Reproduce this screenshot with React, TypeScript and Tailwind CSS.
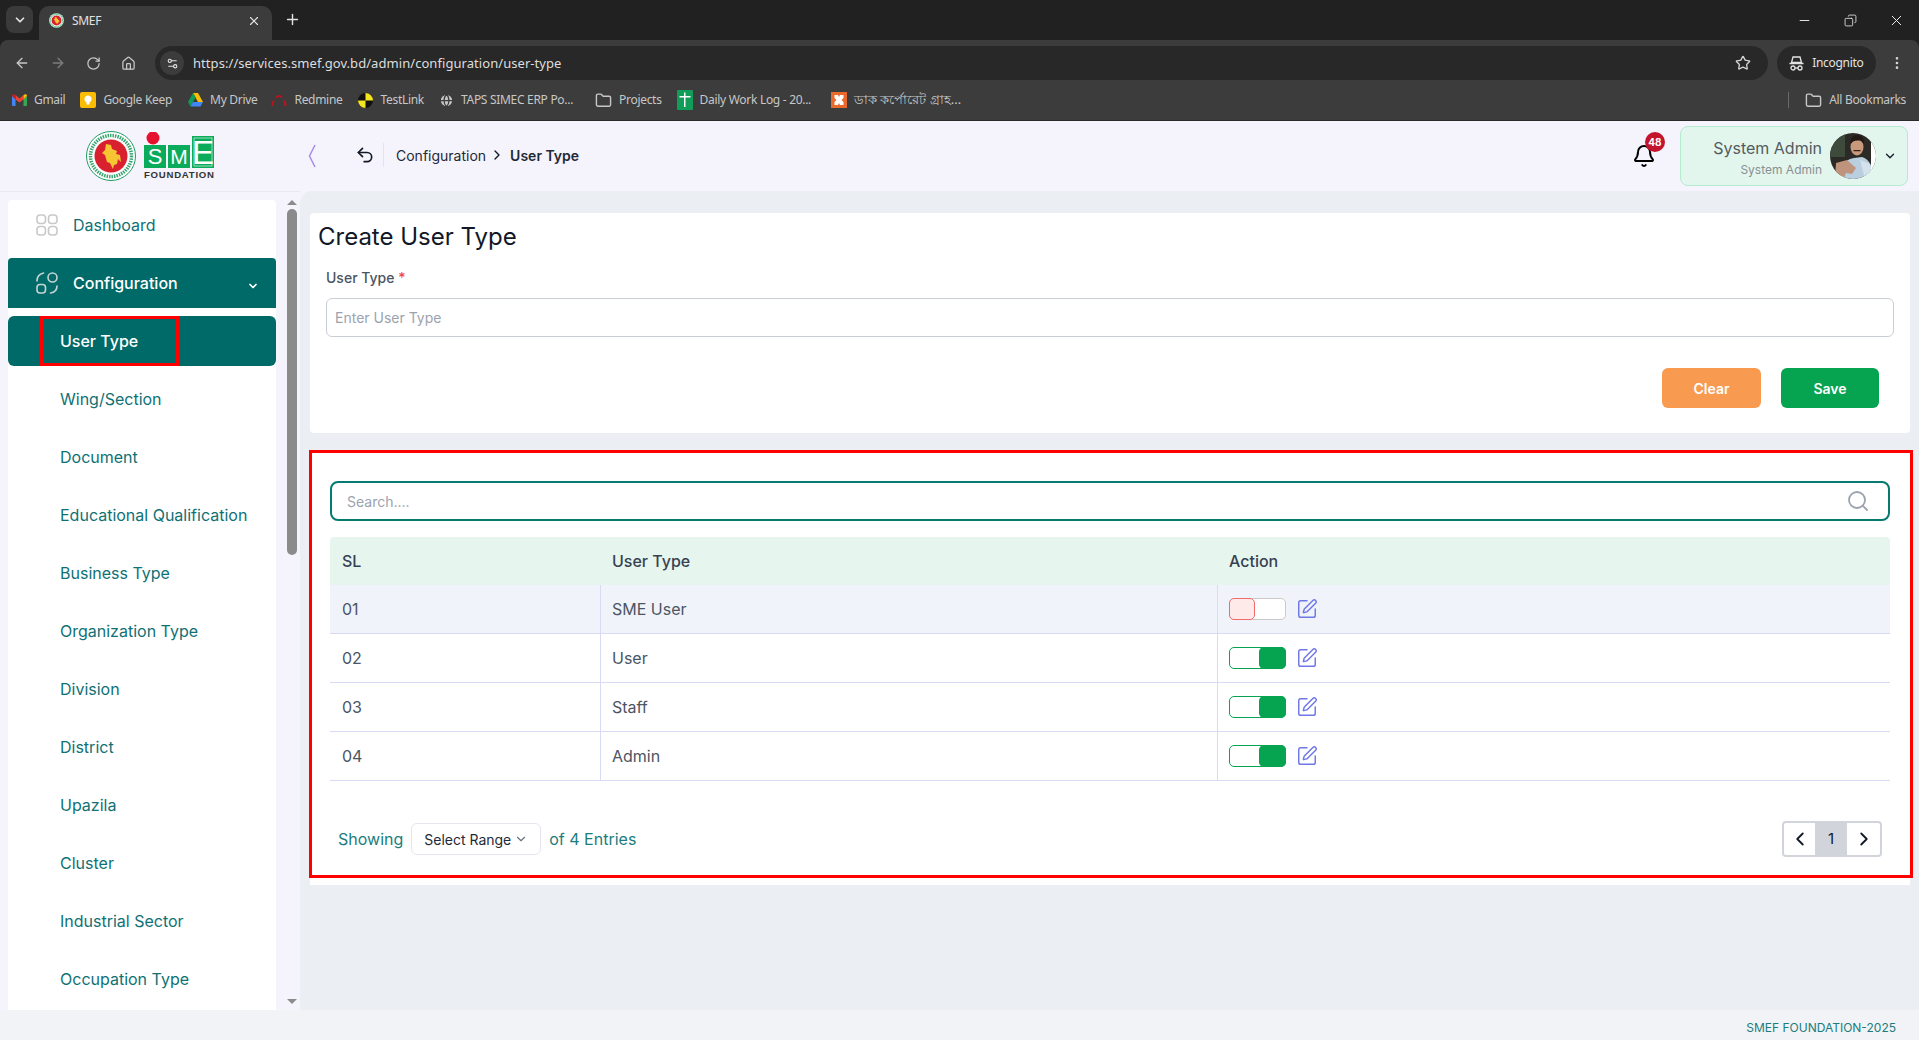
import {
  ArrowLeft,
  ArrowRight,
  ChevronDown,
  ChevronLeft,
  ChevronRight,
  Copy,
  EllipsisVertical,
  Folder,
  Globe,
  Home,
  Minus,
  Plus,
  RotateCw,
  Search,
  Settings2,
  SquarePen,
  Star,
  Undo2,
  Bell,
  X,
} from "lucide-react";

const chromeFont = "[font-family:'Noto_Sans','Open_Sans',sans-serif]";

const Emblem = ({ size }: { size: number }) => (
  <svg width={size} height={size} viewBox="0 0 50 50">
    <circle cx="25" cy="25" r="24.5" fill="#fff" stroke="#1f9d62" strokeWidth="1" />
    <circle cx="25" cy="25" r="20.5" fill="none" stroke="#3aa56f" strokeWidth="3.5" strokeDasharray="1.5 1" />
    <circle cx="25" cy="25" r="16.5" fill="#d9202f" />
    <path d="M20 13l5 1 1 4 5 2-1 3 4 1 1 7-3-3-1 5-3 1-1 4-3-6-3-1-2-7-3-2 3-3z" fill="#f6c532" />
  </svg>
);

const SmeLogo = () => (
  <svg width="72" height="48" viewBox="0 0 72 48">
    <circle cx="9" cy="6" r="6.5" fill="#e5112f" />
    <rect x="0" y="13" width="22" height="23" fill="#0bab5c" />
    <rect x="24" y="13" width="22" height="23" fill="#0bab5c" />
    <rect x="48" y="4" width="22" height="32" fill="#0bab5c" />
    <rect x="50" y="6" width="18" height="28" fill="none" stroke="#fff" strokeWidth="0.6" />
    <text x="11" y="32" textAnchor="middle" fontSize="22" fill="#fff" fontFamily="Liberation Sans">S</text>
    <text x="35" y="32" textAnchor="middle" fontSize="21" fill="#fff" fontFamily="Liberation Sans">M</text>
    <text x="59" y="32" textAnchor="middle" fontSize="33" fill="#fff" fontFamily="Liberation Sans">E</text>
    <text x="0" y="46" fontSize="9.6" fontWeight="700" fill="#333" fontFamily="Liberation Sans" textLength="70">FOUNDATION</text>
  </svg>
);

const Avatar = () => (
  <div className="w-[46px] h-[46px] rounded-full bg-white overflow-hidden shrink-0">
    <svg width="46" height="46" viewBox="0 0 46 46">
      <rect width="46" height="46" fill="#2c2a26" />
      <rect x="0" y="0" width="15" height="24" fill="#3d4a3c" />
      <path d="M10 46c0-12 5-20 14-21l8-1c7 2 11 9 12 22z" fill="#b9cfe0" />
      <path d="M30 27l10 4 3 15h-8z" fill="#d5e2ec" />
      <path d="M6 30l11-3 9 8-4 6-6-1-2 5H5z" fill="#c0947c" />
      <ellipse cx="27" cy="14" rx="6.500" ry="8.500" fill="#c9997c" />
      <path d="M20.500 11c-.5-6 3-9 7-9s7.500 3 6 9c-1.500-3-3-3.500-6-3.500s-5 1-7 3.500z" fill="#241a14" />
      <path d="M23.500 17h7v1.300h-7z" fill="#3a2318" />
      <rect x="41" y="0" width="5" height="46" fill="#fff" />
    </svg>
  </div>
);

const DashboardIcon = () => (
  <svg width="24" height="24" viewBox="0 0 24 24" fill="none" stroke="#c9c9c9" strokeWidth="1.6">
    <rect x="2" y="2" width="8.5" height="8.5" rx="3" />
    <rect x="13.5" y="2" width="8.5" height="8.5" rx="3" />
    <rect x="2" y="13.5" width="8.5" height="8.5" rx="3" />
    <rect x="13.5" y="13.5" width="8.5" height="8.5" rx="3" />
  </svg>
);

const ConfigIcon = () => (
  <svg width="24" height="24" viewBox="0 0 24 24" fill="none" stroke="#c6d5d4" strokeWidth="1.6" strokeLinecap="round">
    <path d="M2 10c0-4 2-7 6.5-8" />
    <circle cx="17.5" cy="6.5" r="4.5" />
    <rect x="2" y="13.5" width="8.5" height="8.5" rx="3" />
    <path d="M22 15c0 4-2 6.5-6.5 7" />
  </svg>
);

const Gmail = () => (
  <svg width="15" height="12" viewBox="0 0 15 12">
    <path d="M0 2v9a1 1 0 001 1h2.500V5.500z" fill="#4285f4" />
    <path d="M15 2v9a1 1 0 01-1 1h-2.500V5.500z" fill="#34a853" />
    <path d="M3.500 5.500V1L7.500 4.500 11.500 1v4.500l-4 3z" fill="#ea4335" />
    <path d="M0 2c0-2 2-2.500 3.500-1v4.500z" fill="#c5221f" />
    <path d="M15 2c0-2-2-2.500-3.500-1v4.500z" fill="#fbbc04" />
  </svg>
);

const Keep = () => (
  <svg width="16" height="16" viewBox="0 0 16 16">
    <rect width="16" height="16" rx="2" fill="#fbbc04" />
    <circle cx="8" cy="7" r="3.500" fill="#fff" />
    <rect x="6.500" y="10" width="3" height="2.500" fill="#fff" />
  </svg>
);

const Drive = () => (
  <svg width="15" height="14" viewBox="0 0 15 14">
    <path d="M5 0h5l5 9h-5z" fill="#fbbc04" />
    <path d="M5 0L0 9l2.500 4.500L7.500 4.500z" fill="#0f9d58" />
    <path d="M2.500 13.500h10L15 9H5z" fill="#4285f4" />
  </svg>
);

const Redmine = () => (
  <svg width="16" height="14" viewBox="0 0 16 14" fill="none" stroke="#b5161e" strokeWidth="2.200">
    <path d="M1.500 13c0-2 .5-4 1.500-5.500M5 4.500C6 3.500 7 3 8 3s2 .5 3 1.500M13 7.500c1 1.500 1.500 3.500 1.500 5.500" />
  </svg>
);

const TestLink = () => (
  <svg width="15" height="15" viewBox="0 0 15 15">
    <circle cx="7.500" cy="7.500" r="7.500" fill="#111" />
    <path d="M7.500 0a7.500 7.500 0 017.500 7.500H7.500zM7.500 15A7.500 7.500 0 010 7.500h7.500z" fill="#f3e620" />
  </svg>
);

const Sheets = () => (
  <svg width="16" height="20" viewBox="0 0 16 20">
    <rect width="16" height="20" rx="1" fill="#0f9d58" />
    <path d="M7 2.500h1.500V6h5v1.500h-5V17H7V7.500H2.500V6H7z" fill="#fff" />
  </svg>
);

const Xampp = () => (
  <svg width="16" height="16" viewBox="0 0 16 16">
    <rect width="16" height="16" fill="#e96a2d" />
    <path d="M3.500 3h3.500l1 2 1-2h3.500v3l-2 2 2 2v3H9l-1-2-1 2H3.500v-3l2-2-2-2z" fill="#fff" />
  </svg>
);

const Bookmark = ({
  icon,
  label,
  className,
  labelClassName,
}: {
  icon: React.ReactNode;
  label: string;
  className?: string;
  labelClassName?: string;
}) => (
  <div className={`flex items-center gap-[7px] shrink-0 ${className ?? ""}`}>
    <span className="flex items-center justify-center">{icon}</span>
    <span className={`text-[#c7c7c7] whitespace-nowrap ${labelClassName ?? "text-[12px] tracking-[-0.3px]"}`}>{label}</span>
  </div>
);

const BrowserChrome = () => (
  <div className={`shrink-0 bg-[#202120] ${chromeFont}`}>
    <div className="h-[40px] flex items-end pl-[6px] pr-[6px]">
      <div className="w-[27px] h-[27px] mb-[7px] rounded-[8px] bg-[#3a3a3a] flex items-center justify-center text-[#e3e3e3]">
        <ChevronDown size={14} strokeWidth={3} />
      </div>
      <div className="ml-[6px] w-[233px] h-[34px] rounded-t-[10px] bg-[#3c3c3c] flex items-center pl-[10px] pr-[11px] pb-[5px] text-[#e3e3e3]">
        <Emblem size={15} />
        <span className="ml-[8px] text-[12px] tracking-[-0.3px]">SMEF</span>
        <X size={14} className="ml-auto" />
      </div>
      <Plus size={17} className="ml-[12px] mb-[12px] text-[#e3e3e3]" />
      <div className="ml-auto flex items-center h-[40px] text-[#ededed]">
        <Minus size={15} strokeWidth={1.5} className="mr-[32px]" />
        <Copy size={13} strokeWidth={1.5} className="mr-[31px] -scale-x-100" />
        <X size={17} strokeWidth={1.4} className="mr-[8px]" />
      </div>
    </div>
    <div className="h-[40px] bg-[#3c3c3c] rounded-t-[8px] flex items-end pl-[14px] pr-[14px] text-[#c7c7c7]">
      <div className="h-[34px] flex items-center gap-[20px]">
        <ArrowLeft size={16} />
        <ArrowRight size={16} className="text-[#7d7d7d]" />
        <RotateCw size={15} />
        <Home size={15} />
      </div>
      <div className="ml-[19px] h-[34px] w-[1615px] rounded-full bg-[#282828] flex items-center pl-[5px] pr-[17px]">
        <span className="w-[24px] h-[24px] rounded-full bg-[#3c3c3c] flex items-center justify-center">
          <Settings2 size={13} className="text-[#e3e3e3]" />
        </span>
        <span className="ml-[9px] text-[13px] text-[#dedede] tracking-[0.06px] pt-[1px]">https://services.smef.gov.bd/admin/configuration/user-type</span>
        <Star size={16} className="ml-auto text-[#d5d5d5]" />
      </div>
      <div className="ml-[9px] h-[34px] w-[99px] rounded-full bg-[#282828] flex items-center pl-[12px] text-[#e3e3e3]">
        <svg width="15" height="15" viewBox="0 0 15 15" fill="none" stroke="currentColor" strokeWidth="1.300">
          <path d="M4 1h7l1.500 5.500h-10zM0.500 7.500h14" />
          <circle cx="4" cy="12" r="2" />
          <circle cx="11" cy="12" r="2" />
          <path d="M6 12h3" />
        </svg>
        <span className="ml-[8px] text-[12px] tracking-[-0.3px]">Incognito</span>
      </div>
      <EllipsisVertical size={16} className="ml-[13px] mb-[9px] text-[#d5d5d5]" />
    </div>
    <div className="h-[41px] bg-[#3c3c3c] border-b border-[#2a2a2a] flex items-center pl-[12px] pr-[13px]">
      <Bookmark icon={<Gmail />} label="Gmail" />
      <Bookmark icon={<Keep />} label="Google Keep" className="ml-[15px]" />
      <Bookmark icon={<Drive />} label="My Drive" className="ml-[16px]" />
      <Bookmark icon={<Redmine />} label="Redmine" className="ml-[14px]" />
      <Bookmark icon={<TestLink />} label="TestLink" className="ml-[16px]" />
      <Bookmark icon={<Globe size={15} fill="#c7c7c7" stroke="#3c3c3c" />} label="TAPS SIMEC ERP Po..." className="ml-[15px]" />
      <Bookmark icon={<Folder size={17} />} label="Projects" className="ml-[22px] text-[#c7c7c7]" />
      <Bookmark icon={<Sheets />} label="Daily Work Log - 20..." className="ml-[15px]" />
      <Bookmark
        icon={<Xampp />}
        label="ডাক কর্পোরেট গ্রাহ..."
        className="ml-[20px]"
        labelClassName="text-[13px]"
      />
      <div className="ml-auto w-px h-[16px] bg-[#6a6a6a]" />
      <Bookmark icon={<Folder size={17} className="text-[#c7c7c7]" />} label="All Bookmarks" className="ml-[16px]" />
    </div>
  </div>
);

const AppHeader = () => (
  <header className="h-[70px] shrink-0 bg-[#f5f3fb] flex items-center">
    <div className="w-[300px] shrink-0 flex items-center pl-[86px] gap-[8px]">
      <Emblem size={50} />
      <SmeLogo />
    </div>
    <svg width="8" height="24" viewBox="0 0 8 24" fill="none" stroke="#a78bea" strokeWidth="1.500" className="ml-[8px]">
      <path d="M7 1L1.500 12 7 23" />
    </svg>
    <Undo2 size={20} strokeWidth={2} className="ml-[39px] -mt-[3px] text-[#111827]" />
    <div className="ml-[8px] w-px h-[24px] bg-[#e5e3ee] -mt-[2px]" />
    <span className="ml-[12px] -mt-[2px] text-[14px] text-[#1f2937]">Configuration</span>
    <ChevronRight size={16} strokeWidth={2} className="ml-[3px] -mt-[2px] text-[#111827]" />
    <span className="ml-[5px] -mt-[2px] text-[14px] font-semibold text-[#1f2937]">User Type</span>
    <div className="ml-auto relative mr-[24px]">
      <Bell size={24} strokeWidth={2} className="text-black" />
      <span className="absolute -top-[12px] left-[13px] w-[20px] h-[20px] rounded-full bg-[#c4142b] text-white text-[10px] font-bold flex items-center justify-center">48</span>
    </div>
    <div className="w-[228px] h-[60px] mr-[11px] rounded-[8px] border border-[#b5ebd0] bg-[#e2f6ed] flex items-center justify-end pr-[10px]">
      <div className="text-right mr-[8px]">
        <p className="text-[16px] leading-[20px] mt-[4px] text-[#555b61]">System Admin</p>
        <p className="text-[12px] leading-[18px] mt-[3px] text-[#8a8f94]">System Admin</p>
      </div>
      <Avatar />
      <ChevronDown size={14} strokeWidth={2.2} className="ml-[7px] text-[#111827]" />
    </div>
  </header>
);

const subItems = [
  "Wing/Section",
  "Document",
  "Educational Qualification",
  "Business Type",
  "Organization Type",
  "Division",
  "District",
  "Upazila",
  "Cluster",
  "Industrial Sector",
  "Occupation Type",
];

const Sidebar = () => (
  <aside className="w-[300px] shrink-0 bg-[#f5f3fb] flex pl-[8px] pt-[8px] border-t border-[#e9e7f0] h-full overflow-hidden">
    <nav className="w-[268px] bg-white flex flex-col gap-[8px] text-[16px] text-[#0f7175] overflow-hidden rounded-t-[4px]">
      <div className="h-[50px] shrink-0 flex items-center pl-[27px] gap-[14px]">
        <DashboardIcon />
        <span>Dashboard</span>
      </div>
      <div className="h-[50px] shrink-0 flex items-center pl-[27px] gap-[14px] bg-[#006a68] text-white font-medium rounded-t-[4px]">
        <ConfigIcon />
        <span>Configuration</span>
        <ChevronDown size={12} strokeWidth={3.5} className="ml-auto mr-[17px] mt-[6px]" />
      </div>
      <div className="relative h-[50px] shrink-0 flex items-center pl-[52px] bg-[#006a68] text-white font-medium rounded-[6px]">
        <span>User Type</span>
        <div className="absolute left-[32px] top-0 w-[139px] h-[50px] border-[3px] border-[#ff0000]" />
      </div>
      {subItems.map((item) => (
        <div key={item} className="h-[50px] shrink-0 flex items-center pl-[52px]">
          {item}
        </div>
      ))}
    </nav>
    <div className="ml-[9px] w-[13px] h-full flex flex-col items-center bg-[#f5f3fb] pb-[6px]">
      <span className="w-0 h-0 mt-0 border-x-[5px] border-x-transparent border-b-[5px] border-b-[#8b8b8b]" />
      <div className="mt-[4px] w-[10px] h-[346px] rounded-full bg-[#8b8b8b]" />
      <span className="mt-auto w-0 h-0 border-x-[5px] border-x-transparent border-t-[5px] border-t-[#8b8b8b]" />
    </div>
  </aside>
);

const CreateCard = () => (
  <section className="bg-white rounded-[4px] h-[220px] pt-[6px] pl-[8px] pr-[16px]">
    <h1 className="text-[24px] leading-[36px] text-[#111827]">Create User Type</h1>
    <label className="block ml-[8px] mt-[13px] text-[14px] leading-[20px] font-medium text-[#4b5563]">
      User Type <span className="text-[#ef4444]">*</span>
    </label>
    <div className="ml-[8px] mt-[10px] h-[39px] rounded-[6px] border border-[#c9ced6] flex items-center pl-[8px] text-[14px] text-[#9ca3af]">
      Enter User Type
    </div>
    <div className="mt-[31px] flex justify-end gap-[20px] pr-[15px]">
      <button className="w-[99px] h-[40px] rounded-[6px] bg-[#f89a50] text-white text-[14px] font-semibold">Clear</button>
      <button className="w-[98px] h-[40px] rounded-[6px] bg-[#06a350] text-white text-[14px] font-semibold">Save</button>
    </div>
  </section>
);

const Toggle = ({ on }: { on: boolean }) =>
  on ? (
    <div className="w-[57px] h-[22px] rounded-[5px] border border-[#06a350] bg-white flex justify-end">
      <div className="w-[26px] h-full -my-px -mr-px box-content py-px pr-px rounded-[5px] bg-[#06a350]" />
    </div>
  ) : (
    <div className="w-[57px] h-[22px] rounded-[5px] border border-[#cfc8c8] bg-white flex">
      <div className="w-[26px] h-[22px] -mt-px -ml-px rounded-[5px] border border-[#f36a6a] bg-[#ffeaea]" />
    </div>
  );

const rows = [
  { sl: "01", name: "SME User", on: false },
  { sl: "02", name: "User", on: true },
  { sl: "03", name: "Staff", on: true },
  { sl: "04", name: "Admin", on: true },
];

const ListCard = () => (
  <section className="relative mt-[18px] bg-white h-[434px] pt-[30px] px-[20px]">
    <div className="h-[40px] rounded-[8px] border-2 border-[#047a70] flex items-center pl-[15px] pr-[18px] text-[14px] text-[#9ca3af]">
      Search....
      <Search size={24} strokeWidth={1.8} className="ml-auto text-[#9ca3af]" />
    </div>
    <div className="mt-[16px] text-[16px]">
      <div className="grid grid-cols-[270px_617px_1fr] h-[48px] items-center bg-[#e6f6ef] rounded-t-[4px] font-medium text-[#374151]">
        <span className="pl-[12px]">SL</span>
        <span className="pl-[12px]">User Type</span>
        <span className="pl-[12px]">Action</span>
      </div>
      {rows.map((row, i) => (
        <div
          key={row.sl}
          className={`grid grid-cols-[270px_617px_1fr] h-[49px] border-b border-[#d9daf5] text-[#4b5563] ${i === 0 ? "bg-[#f0f3f9]" : "bg-white"}`}
        >
          <span className="pl-[12px] flex items-center">{row.sl}</span>
          <span className="pl-[11px] flex items-center border-l border-[#d9daf5]">{row.name}</span>
          <div className="pl-[11px] flex items-center gap-[10px] border-l border-[#d9daf5]">
            <Toggle on={row.on} />
            <SquarePen size={22} strokeWidth={1.6} className="text-[#6f78e6]" />
          </div>
        </div>
      ))}
    </div>
    <div className="mt-[40px] flex items-center pl-[8px] pr-[8px] text-[16px] text-[#1b7d7d]">
      <span>Showing</span>
      <div className="ml-[8px] w-[130px] h-[32px] rounded-[6px] border border-[#e5e7f0] flex items-center justify-center gap-[3px] text-[14px] text-[#1f2937]">
        Select Range
        <ChevronDown size={14} className="text-[#6b7280]" />
      </div>
      <span className="ml-[8px]">of 4 Entries</span>
      <div className="ml-auto h-[36px] w-[100px] rounded-[4px] border-2 border-[#d1d5db] grid grid-cols-[31px_32px_1fr] text-[#111827]">
        <span className="flex items-center justify-center"><ChevronLeft size={22} strokeWidth={2} /></span>
        <span className="flex items-center justify-center bg-[#d1d5db] text-[15px]">1</span>
        <span className="flex items-center justify-center"><ChevronRight size={22} strokeWidth={2} /></span>
      </div>
    </div>
    <div className="absolute left-[-1px] top-[-1px] right-[-3px] bottom-[7px] border-[3px] border-[#ff0000] pointer-events-none" />
  </section>
);

export default function App() {
  return (
    <div className="w-full h-screen flex flex-col overflow-hidden bg-[#f5f3fb] font-['Inter',sans-serif]">
      <BrowserChrome />
      <AppHeader />
      <div className="flex-1 min-h-0 flex flex-col">
        <div className="flex-1 min-h-0 flex">
          <Sidebar />
          <main className="flex-1 min-w-0 bg-[#ebeef3] rounded-tl-[12px] pt-[22px] pl-[10px] pr-[9px]">
            <CreateCard />
            <ListCard />
          </main>
        </div>
        <footer className="h-[30px] shrink-0 bg-[#f1f3f6] flex items-center justify-end pr-[23px] pt-[5px] text-[12px] text-[#1b7d7d]">
          SMEF FOUNDATION-2025
        </footer>
      </div>
    </div>
  );
}
